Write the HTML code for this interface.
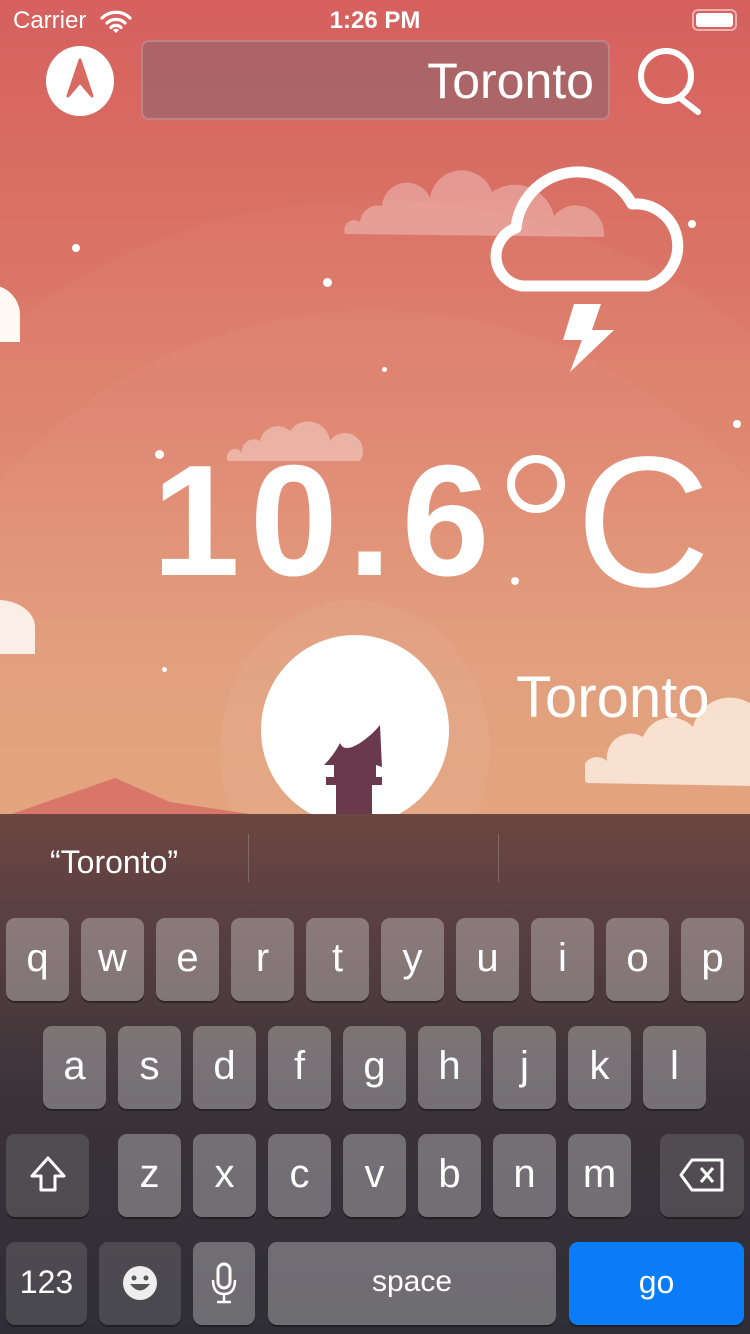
<!DOCTYPE html>
<html><head><meta charset="utf-8"><style>
*{margin:0;padding:0;box-sizing:border-box}
body{width:750px;height:1334px;overflow:hidden;position:relative;font-family:"Liberation Sans",sans-serif;background:linear-gradient(180deg,#d6605e 0%,#dc7a68 25%,#e29a76 50%,#e8b07a 100%)}
.abs{position:absolute}
.kb{position:absolute;left:0;top:814px;width:750px;height:520px;background:linear-gradient(180deg,#6c4640 0%,#5a4042 20%,#3a3339 55%,#2f2e36 100%)}
.k{position:absolute;height:83px;border-radius:9px;background:rgba(255,255,255,0.30);color:#fff;font-size:40px;text-align:center;line-height:80px;box-shadow:0 2px 0 rgba(0,0,0,0.35)}
.s{background:rgba(255,255,255,0.13)}
.w{color:#fff}
</style></head><body>
<div class="abs" style="left:-200px;top:200px;width:1150px;height:1100px;border-radius:50%;background:rgba(255,255,255,0.03)"></div>
<div class="abs" style="left:-100px;top:310px;width:950px;height:900px;border-radius:50%;background:rgba(255,255,255,0.03)"></div>
<div class="abs" style="left:220px;top:600px;width:270px;height:300px;border-radius:50%;background:rgba(255,255,255,0.05)"></div>
<div class="abs w" style="left:13px;top:7px;font-size:24px">Carrier</div>
<svg class="abs" style="left:100px;top:9px" width="32" height="24" viewBox="0 0 32 24"><path d="M2 9a20 20 0 0 1 28 0M7 14a13 13 0 0 1 18 0M11 18.5a7 7 0 0 1 10 0" stroke="#fff" stroke-width="3.2" fill="none" stroke-linecap="round"/><path d="M13 21l3 3 3-3a4 4 0 0 0-6 0z" fill="#fff"/></svg>
<div class="abs w" style="left:0;width:750px;text-align:center;top:7px;font-size:24px;font-weight:bold">1:26 PM</div>
<div class="abs" style="left:692px;top:9px;width:45px;height:22px;border:2px solid rgba(255,255,255,0.5);border-radius:6px;padding:2px"><div style="width:100%;height:100%;background:#fff;border-radius:3px"></div></div>
<div class="abs" style="left:46px;top:46px;width:68px;height:70px;border-radius:50%;background:#fff"></div>
<svg class="abs" style="left:46px;top:46px" width="68" height="70" viewBox="0 0 68 70"><path d="M34 14 L22 50 L34 36 L46 50 Z" fill="#d96a62" stroke="#d96a62" stroke-width="3" stroke-linejoin="round"/></svg>
<div class="abs" style="left:141px;top:40px;width:469px;height:80px;border-radius:8px;background:rgba(120,100,110,0.45);border:2px solid rgba(255,255,255,0.2)"></div>
<div class="abs w" style="left:141px;width:453px;text-align:right;top:52px;font-size:50px">Toronto</div>
<svg class="abs" style="left:636px;top:44px" width="72" height="72" viewBox="0 0 72 72"><circle cx="30" cy="32" r="25" stroke="#fff" stroke-width="6" fill="none"/><path d="M44 54 L62 68" stroke="#fff" stroke-width="6" stroke-linecap="round"/></svg>
<svg class="abs" style="left:340px;top:140px" width="270" height="100" viewBox="0 0 270 100"><path d="M5 94 a10 10 0 0 1 15-12 a18 18 0 0 1 22-16 a25 25 0 0 1 48-8 a32 32 0 0 1 62-6 a40 40 0 0 1 62 24 a28 28 0 0 1 50 18 v3z" fill="rgba(255,255,255,0.3)"/></svg>
<svg class="abs" style="left:225px;top:412px" width="140" height="52" viewBox="0 0 140 52"><path d="M3 49 a8 8 0 0 1 14-8 a12 12 0 0 1 18-12 a18 18 0 0 1 30-10 a22 22 0 0 1 40 10 a18 18 0 0 1 30 20z" fill="rgba(255,255,255,0.35)"/></svg>
<svg class="abs" style="left:585px;top:690px" width="170" height="96" viewBox="0 0 170 96"><path d="M2 93 a14 14 0 0 1 20-22 a24 24 0 0 1 36-24 a30 30 0 0 1 50-10 a38 38 0 0 1 62-20 v79z" fill="rgba(255,245,235,0.75)"/></svg>
<div class="abs" style="left:-40px;top:285px;width:60px;height:60px;border-radius:50% 50% 0 0;background:#fff8f4;clip-path:inset(0 0 3px 0)"></div>
<div class="abs" style="left:-40px;top:600px;width:75px;height:54px;border-radius:50% 50% 0 0;background:#fbeee6"></div>
<svg class="abs" style="left:486px;top:150px" width="212" height="230" viewBox="0 0 212 230"><path d="M36 136 A30 30 0 0 1 30 78 A62 62 0 0 1 146 54 A42 42 0 0 1 162 136 Z" fill="none" stroke="#fff" stroke-width="11" stroke-linejoin="round"/><path d="M88 154 L115 154 L106 180 L128 180 L84 222 L96 190 L77 190 Z" fill="#fff"/></svg>
<div class="abs w" style="left:152px;top:442px;font-size:158px;font-weight:bold;letter-spacing:10px;line-height:158px">10.6</div>
<div class="abs" style="left:507px;top:455px;width:58px;height:58px;border-radius:50%;border:8px solid #fff"></div>
<div class="abs w" style="left:576px;top:428px;font-size:186px;line-height:190px">C</div>
<div class="abs w" style="left:516px;top:664px;font-size:58px">Toronto</div>
<div class="abs" style="left:72px;top:244px;width:8px;height:8px;border-radius:50%;background:#fff"></div>
<div class="abs" style="left:323px;top:278px;width:9px;height:9px;border-radius:50%;background:#fff"></div>
<div class="abs" style="left:382px;top:367px;width:5px;height:5px;border-radius:50%;background:#fff"></div>
<div class="abs" style="left:155px;top:450px;width:9px;height:9px;border-radius:50%;background:#fff"></div>
<div class="abs" style="left:688px;top:220px;width:8px;height:8px;border-radius:50%;background:#fff"></div>
<div class="abs" style="left:733px;top:420px;width:8px;height:8px;border-radius:50%;background:#fff"></div>
<div class="abs" style="left:511px;top:577px;width:8px;height:8px;border-radius:50%;background:#fff"></div>
<div class="abs" style="left:162px;top:667px;width:5px;height:5px;border-radius:50%;background:#fff"></div>
<svg class="abs" style="left:0;top:770px" width="750" height="50" viewBox="0 0 750 50"><path d="M0 48 L115 8 L170 32 L290 50 L0 50Z" fill="#d9766a"/></svg>
<div class="abs" style="left:261px;top:635px;width:188px;height:190px;border-radius:50%;background:#fff"></div>
<svg class="abs" style="left:320px;top:725px" width="70" height="92" viewBox="0 0 70 92"><path d="M20 18 Q24 28 40 18 Q52 10 60 0 L62 42 L56 40 L56 52 L62 52 L62 60 L52 60 L52 92 L16 92 L16 60 L6 60 L6 52 L14 52 L14 40 L4 40 Q14 30 20 18Z" fill="#6a3a4c"/></svg>
<div class="kb">
<div class="abs" style="left:248px;top:20px;width:1px;height:48px;background:rgba(255,255,255,0.2)"></div>
<div class="abs" style="left:498px;top:20px;width:1px;height:48px;background:rgba(255,255,255,0.2)"></div>
<div class="abs w" style="left:50px;top:30px;font-size:32px">“Toronto”</div>
</div>
<div id="keys"></div>
<script>
var h='';function k(x,y,w,t,c,fs){h+='<div class="k '+(c||'')+'" style="left:'+x+'px;top:'+y+'px;width:'+w+'px;'+(fs?'font-size:'+fs+'px;':'')+'">'+t+'</div>';}
'qwertyuiop'.split('').forEach(function(c,i){k(6+i*75,918,63,c)});
'asdfghjkl'.split('').forEach(function(c,i){k(43+i*75,1026,63,c)});
'zxcvbnm'.split('').forEach(function(c,i){k(118+i*75,1134,63,c)});
k(6,1134,83,'<svg width="40" height="40" viewBox="0 0 40 40" style="margin-top:20px"><path d="M20 4 L36 22 L27 22 L27 36 L13 36 L13 22 L4 22 Z" fill="none" stroke="#fff" stroke-width="3" stroke-linejoin="round"/></svg>','s');
k(660,1134,84,'<svg width="48" height="36" viewBox="0 0 48 36" style="margin-top:23px"><path d="M14 3 L44 3 L44 33 L14 33 L3 18 Z" fill="none" stroke="#fff" stroke-width="3" stroke-linejoin="round"/><path d="M23 11 L35 25 M35 11 L23 25" stroke="#fff" stroke-width="3"/></svg>','s');
k(6,1242,81,'123','s',32);
k(99,1242,82,'<svg width="36" height="36" viewBox="0 0 36 36" style="margin-top:23px"><circle cx="18" cy="18" r="17" fill="#eee"/><circle cx="12" cy="13" r="2.5" fill="#555"/><circle cx="24" cy="13" r="2.5" fill="#555"/><path d="M8 19 Q18 32 28 19Z" fill="#555"/></svg>','s');
k(193,1242,62,'<svg width="26" height="42" viewBox="0 0 26 42" style="margin-top:20px"><rect x="7" y="2" width="12" height="24" rx="6" fill="none" stroke="#fff" stroke-width="3"/><path d="M2 18 Q2 32 13 32 Q24 32 24 18 M13 32 V40 M6 40 H20" fill="none" stroke="#fff" stroke-width="2.5"/></svg>');
k(268,1242,288,'space','',30);
h+='<div class="k" style="left:569px;top:1242px;width:175px;background:#0a7cf8;font-size:32px">go</div>';
document.getElementById('keys').innerHTML=h;
</script>
</body></html>
